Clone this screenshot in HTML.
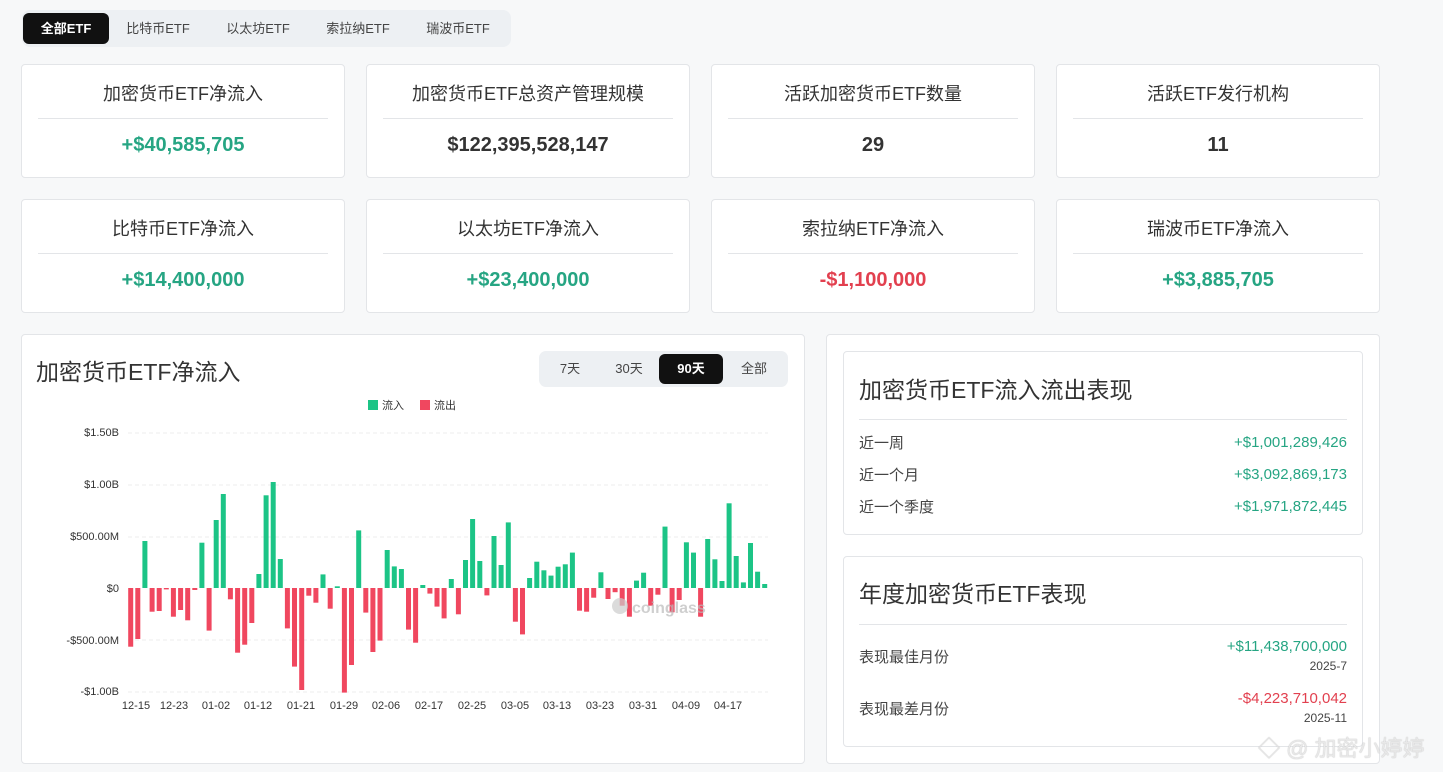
<!DOCTYPE html>
<html><head><meta charset="utf-8"><style>
*{box-sizing:border-box;margin:0;padding:0}
body{width:1443px;height:772px;background:#f7f8f9;font-family:"Liberation Sans","Noto Sans CJK SC",sans-serif;color:#333;position:relative;overflow:hidden}
.abs{position:absolute}
.tabs{left:22px;top:10px;width:489px;height:37px;background:#edf0f3;border-radius:8px}
.tab{position:absolute;top:3px;height:31px;line-height:31px;font-size:13px;color:#444;text-align:center}
.tab.on{background:#111;color:#fff;border-radius:6px;font-weight:bold}
.card{position:absolute;background:#fff;border:1px solid #e3e5e8;border-radius:4px}
.card .t{position:absolute;left:0;right:0;top:15px;text-align:center;font-size:18px;color:#333}
.card .d{position:absolute;left:16px;right:16px;top:53px;border-top:1px solid #e3e5e8}
.card .v{position:absolute;left:0;right:0;top:69px;text-align:center;font-size:20px;font-weight:bold;color:#333}
.g{color:#26a583!important}.r{color:#e2404f!important}
.row{position:absolute;left:15px;right:15px;font-size:15px;color:#444}
.row span{position:absolute;right:0;top:2px}
</style></head><body>
<div class="abs tabs">
<div class="tab on" style="left:1px;width:86px">全部ETF</div>
<div class="tab" style="left:88px;width:96px">比特币ETF</div>
<div class="tab" style="left:188px;width:96px">以太坊ETF</div>
<div class="tab" style="left:288px;width:96px">索拉纳ETF</div>
<div class="tab" style="left:388px;width:96px">瑞波币ETF</div>
</div>

<div class="card" style="left:21px;top:64px;width:324px;height:114px"><div class="t">加密货币ETF净流入</div><div class="d"></div><div class="v g">+$40,585,705</div></div>
<div class="card" style="left:366px;top:64px;width:324px;height:114px"><div class="t">加密货币ETF总资产管理规模</div><div class="d"></div><div class="v">$122,395,528,147</div></div>
<div class="card" style="left:711px;top:64px;width:324px;height:114px"><div class="t">活跃加密货币ETF数量</div><div class="d"></div><div class="v">29</div></div>
<div class="card" style="left:1056px;top:64px;width:324px;height:114px"><div class="t">活跃ETF发行机构</div><div class="d"></div><div class="v">11</div></div>

<div class="card" style="left:21px;top:199px;width:324px;height:114px"><div class="t">比特币ETF净流入</div><div class="d"></div><div class="v g">+$14,400,000</div></div>
<div class="card" style="left:366px;top:199px;width:324px;height:114px"><div class="t">以太坊ETF净流入</div><div class="d"></div><div class="v g">+$23,400,000</div></div>
<div class="card" style="left:711px;top:199px;width:324px;height:114px"><div class="t">索拉纳ETF净流入</div><div class="d"></div><div class="v r">-$1,100,000</div></div>
<div class="card" style="left:1056px;top:199px;width:324px;height:114px"><div class="t">瑞波币ETF净流入</div><div class="d"></div><div class="v g">+$3,885,705</div></div>

<div class="card" style="left:21px;top:334px;width:784px;height:430px"></div>
<div class="abs" style="left:36px;top:353px;font-size:23px;color:#333">加密货币ETF净流入</div>
<div class="abs" style="left:539px;top:351px;width:249px;height:36px;background:#edf0f3;border-radius:7px">
<div class="tab" style="left:6px;width:50px;top:3px;height:30px;line-height:30px">7天</div>
<div class="tab" style="left:62px;width:56px;top:3px;height:30px;line-height:30px">30天</div>
<div class="tab on" style="left:120px;width:64px;top:3px;height:30px;line-height:30px">90天</div>
<div class="tab" style="left:186px;width:58px;top:3px;height:30px;line-height:30px">全部</div>
</div>

<svg class="abs" style="left:0;top:0" width="810" height="772">
<g font-family="Liberation Sans,Noto Sans CJK SC,sans-serif" font-size="11" fill="#333">
<rect x="368" y="400" width="10" height="10" fill="#1cc486"/><text x="382" y="409" font-size="11">流入</text>
<rect x="420" y="400" width="10" height="10" fill="#f0475f"/><text x="434" y="409" font-size="11">流出</text>
<g text-anchor="end"><text x="119" y="436">$1.50B</text><text x="119" y="488">$1.00B</text><text x="119" y="540">$500.00M</text><text x="119" y="592">$0</text><text x="119" y="644">-$500.00M</text><text x="119" y="695">-$1.00B</text></g>
<g stroke="#ececec" stroke-dasharray="4,3"><line x1="128" x2="768" y1="433" y2="433"/><line x1="128" x2="768" y1="485" y2="485"/><line x1="128" x2="768" y1="537" y2="537"/><line x1="128" x2="768" y1="640" y2="640"/><line x1="128" x2="768" y1="692" y2="692"/></g>
<g text-anchor="middle"><text x="136" y="709">12-15</text><text x="174" y="709">12-23</text><text x="216" y="709">01-02</text><text x="258" y="709">01-12</text><text x="301" y="709">01-21</text><text x="344" y="709">01-29</text><text x="386" y="709">02-06</text><text x="429" y="709">02-17</text><text x="472" y="709">02-25</text><text x="515" y="709">03-05</text><text x="557" y="709">03-13</text><text x="600" y="709">03-23</text><text x="643" y="709">03-31</text><text x="686" y="709">04-09</text><text x="728" y="709">04-17</text></g>
</g>
<g fill="#1cc486">
<rect x="142.4" y="541" width="5" height="47"/><rect x="199.4" y="542.7" width="5" height="45.3"/><rect x="213.7" y="520" width="5" height="68"/><rect x="220.8" y="494" width="5" height="94"/><rect x="256.4" y="574" width="5" height="14"/><rect x="263.6" y="495.3" width="5" height="92.7"/><rect x="270.7" y="482" width="5" height="106"/><rect x="277.8" y="559" width="5" height="29"/><rect x="320.5" y="574.4" width="5" height="13.6"/><rect x="334.8" y="586.3" width="5" height="1.7"/><rect x="356.2" y="530.4" width="5" height="57.6"/><rect x="384.7" y="550" width="5" height="38"/><rect x="391.8" y="566.4" width="5" height="21.6"/><rect x="398.9" y="569" width="5" height="19"/><rect x="420.3" y="585" width="5" height="3"/><rect x="448.8" y="579" width="5" height="9"/><rect x="463" y="560" width="5" height="28"/><rect x="470.1" y="519" width="5" height="69"/><rect x="477.3" y="561" width="5" height="27"/><rect x="491.5" y="536" width="5" height="52"/><rect x="498.6" y="565" width="5" height="23"/><rect x="505.8" y="522.4" width="5" height="65.6"/><rect x="527.1" y="578" width="5" height="10"/><rect x="534.3" y="561.7" width="5" height="26.3"/><rect x="541.4" y="570.3" width="5" height="17.7"/><rect x="548.5" y="575.6" width="5" height="12.4"/><rect x="555.6" y="566.7" width="5" height="21.3"/><rect x="562.8" y="564.3" width="5" height="23.7"/><rect x="569.9" y="552.6" width="5" height="35.4"/><rect x="598.4" y="572.3" width="5" height="15.7"/><rect x="634" y="580.6" width="5" height="7.4"/><rect x="641.1" y="572.7" width="5" height="15.3"/><rect x="662.5" y="526.6" width="5" height="61.4"/><rect x="683.9" y="542.3" width="5" height="45.7"/><rect x="691" y="552.6" width="5" height="35.4"/><rect x="705.2" y="539" width="5" height="49"/><rect x="712.4" y="559.3" width="5" height="28.7"/><rect x="719.5" y="581" width="5" height="7"/><rect x="726.6" y="503.3" width="5" height="84.7"/><rect x="733.7" y="556" width="5" height="32"/><rect x="740.9" y="582.4" width="5" height="5.6"/><rect x="748" y="543" width="5" height="45"/><rect x="755.1" y="571.7" width="5" height="16.3"/><rect x="762.2" y="584" width="5" height="4"/>
</g>
<g fill="#f0475f">
<rect x="128.2" y="588" width="5" height="58.7"/><rect x="135.3" y="588" width="5" height="51"/><rect x="149.6" y="588" width="5" height="23.7"/><rect x="156.7" y="588" width="5" height="23"/><rect x="163.8" y="588" width="5" height="1.4"/><rect x="170.9" y="588" width="5" height="28.7"/><rect x="178.1" y="588" width="5" height="22"/><rect x="185.2" y="588" width="5" height="32.3"/><rect x="192.3" y="588" width="5" height="2"/><rect x="206.6" y="588" width="5" height="42.6"/><rect x="227.9" y="588" width="5" height="11.3"/><rect x="235.1" y="588" width="5" height="64.7"/><rect x="242.2" y="588" width="5" height="56.7"/><rect x="249.3" y="588" width="5" height="35"/><rect x="284.9" y="588" width="5" height="40.4"/><rect x="292" y="588" width="5" height="78.6"/><rect x="299.2" y="588" width="5" height="102"/><rect x="306.3" y="588" width="5" height="7.7"/><rect x="313.4" y="588" width="5" height="14.7"/><rect x="327.7" y="588" width="5" height="20.7"/><rect x="341.9" y="588" width="5" height="104.6"/><rect x="349" y="588" width="5" height="77"/><rect x="363.3" y="588" width="5" height="24.6"/><rect x="370.4" y="588" width="5" height="64"/><rect x="377.5" y="588" width="5" height="52.6"/><rect x="406" y="588" width="5" height="41.6"/><rect x="413.1" y="588" width="5" height="54.7"/><rect x="427.4" y="588" width="5" height="5.6"/><rect x="434.5" y="588" width="5" height="18.6"/><rect x="441.6" y="588" width="5" height="30.4"/><rect x="455.9" y="588" width="5" height="26.3"/><rect x="484.4" y="588" width="5" height="7.4"/><rect x="512.9" y="588" width="5" height="33.7"/><rect x="520" y="588" width="5" height="46.4"/><rect x="577" y="588" width="5" height="22.7"/><rect x="584.1" y="588" width="5" height="23.7"/><rect x="591.2" y="588" width="5" height="9.7"/><rect x="605.5" y="588" width="5" height="11"/><rect x="612.6" y="588" width="5" height="4.2"/><rect x="619.7" y="588" width="5" height="17.7"/><rect x="626.9" y="588" width="5" height="28.7"/><rect x="648.2" y="588" width="5" height="17.7"/><rect x="655.4" y="588" width="5" height="6.7"/><rect x="669.6" y="588" width="5" height="24.3"/><rect x="676.7" y="588" width="5" height="12"/><rect x="698.1" y="588" width="5" height="28.7"/>
</g>
<circle cx="620" cy="606" r="8" fill="#ccc" opacity="0.7"/>
<text x="632" y="613" font-family="Liberation Sans,sans-serif" font-size="16" font-weight="bold" fill="#bbb" opacity="0.7">coinglass</text>
</svg>

<div class="card" style="left:826px;top:334px;width:554px;height:430px"></div>
<div class="card" style="left:843px;top:351px;width:520px;height:184px">
<div class="abs" style="left:15px;top:19px;font-size:23px;color:#333">加密货币ETF流入流出表现</div>
<div class="abs" style="left:15px;right:15px;top:67px;border-top:1px solid #e3e5e8"></div>
<div class="row" style="top:80px">近一周<span class="g">+$1,001,289,426</span></div>
<div class="row" style="top:112px">近一个月<span class="g">+$3,092,869,173</span></div>
<div class="row" style="top:144px">近一个季度<span class="g">+$1,971,872,445</span></div>
</div>
<div class="card" style="left:843px;top:556px;width:520px;height:191px">
<div class="abs" style="left:15px;top:18px;font-size:23px;color:#333">年度加密货币ETF表现</div>
<div class="abs" style="left:15px;right:15px;top:67px;border-top:1px solid #e3e5e8"></div>
<div class="row" style="top:89px">表现最佳月份<span class="g" style="top:-8px">+$11,438,700,000</span><span style="top:13px;font-size:12px;color:#444">2025-7</span></div>
<div class="row" style="top:141px">表现最差月份<span class="r" style="top:-8px">-$4,223,710,042</span><span style="top:13px;font-size:12px;color:#444">2025-11</span></div>
</div>
<div class="abs" style="left:1258px;top:731px;font-size:22px;color:#e8e8e8;text-shadow:0 0 1px #aaa">◇ @ 加密小婷婷</div>
</body></html>
